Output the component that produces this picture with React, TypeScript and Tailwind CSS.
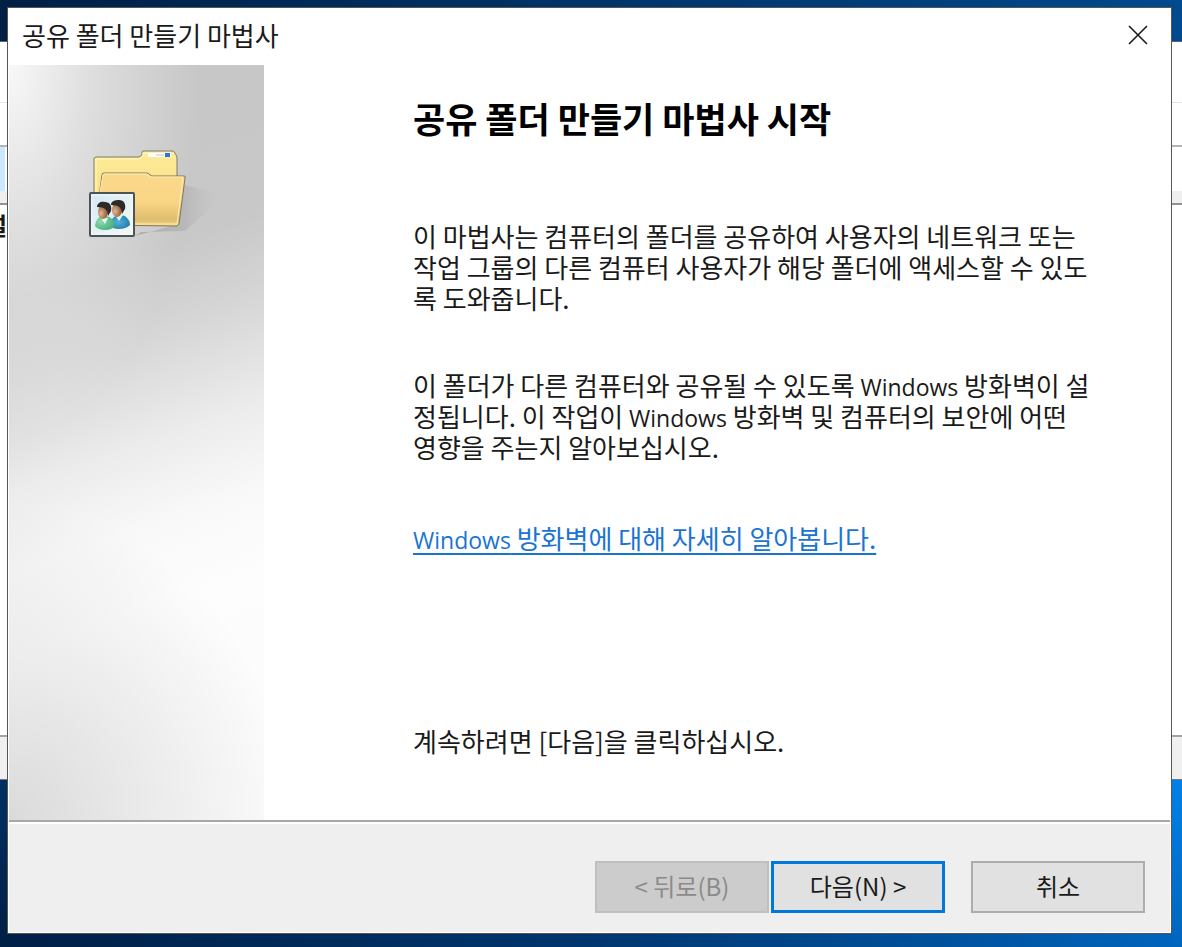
import type { ReactNode } from 'react'

function Latin({ children }: { children: ReactNode }) {
  return <span className="font-['Open_Sans'] text-[23px] leading-none">{children}</span>
}

function SharedFolderIcon() {
  return (
    <svg viewBox="0 0 150 115" className="h-[115px] w-[150px]" aria-hidden="true">
      <defs>
        <linearGradient id="back" x1="0" y1="0" x2="0" y2="1">
          <stop offset="0" stopColor="#fdeb98" />
          <stop offset="1" stopColor="#f8dc80" />
        </linearGradient>
        <linearGradient id="front" x1="0" y1="0" x2="0" y2="1">
          <stop offset="0" stopColor="#fbd98c" />
          <stop offset="0.55" stopColor="#f9d585" />
          <stop offset="0.88" stopColor="#dfbd70" />
          <stop offset="1" stopColor="#f3d27c" />
        </linearGradient>
        <linearGradient id="card" x1="0" y1="0" x2="1" y2="1">
          <stop offset="0" stopColor="#d3eaf3" />
          <stop offset="1" stopColor="#f6f8f4" />
        </linearGradient>
        <linearGradient id="shade" x1="0" y1="0" x2="1" y2="0">
          <stop offset="0" stopColor="#777" stopOpacity="0.4" />
          <stop offset="0.6" stopColor="#888" stopOpacity="0.25" />
          <stop offset="1" stopColor="#aaa" stopOpacity="0" />
        </linearGradient>
        <radialGradient id="face" cx="0.3" cy="0.6" r="0.7">
          <stop offset="0" stopColor="#e2b694" />
          <stop offset="1" stopColor="#855030" />
        </radialGradient>
        <radialGradient id="green" cx="0.3" cy="0.4" r="0.8">
          <stop offset="0" stopColor="#8bdcae" />
          <stop offset="1" stopColor="#3da877" />
        </radialGradient>
        <radialGradient id="blue" cx="0.4" cy="0.5" r="0.8">
          <stop offset="0" stopColor="#4db4dc" />
          <stop offset="1" stopColor="#1a6b9e" />
        </radialGradient>
      </defs>
      <path d="M60 101L66 97 110 96 142 67 138 56 108 50 100 90Z" fill="url(#shade)" />
      <path
        d="M19 84V24q0-2 2-2H64l3-2v-3q0-1 2-1H97q2 0 3 2l2 4V84Z"
        fill="url(#back)"
        stroke="#807b68"
      />
      <path d="M21 83V24H65l3-3v-3H96" fill="none" stroke="#fffbc0" />
      <path d="M73 18H96V22H73Z" fill="#fff" />
      <path d="M81 20h8" stroke="#b9c3d6" />
      <rect x="90" y="18" width="5" height="4" fill="#2c74dc" />
      <path
        d="M20 90L27 40q0-2 2-2H72q2 0 3 2 1 1 3 1H109q2 0 1 2L104 89q-1 2-3 2Z"
        fill="url(#front)"
        stroke="#80765a"
      />
      <path d="M24 62L28 40q0-1 2-1H72l3 3H108L102 89H60" fill="none" stroke="#ffedb5" />
      <rect x="15" y="58" width="44" height="43" rx="1" fill="url(#card)" stroke="#4e5357" strokeWidth="2" />
      <rect x="17" y="60" width="40" height="39" fill="none" stroke="#f3fafc" />
      <path d="M35 90c1-7 5-10 10-10 6 0 10 5 10 10q-4 4-11 4-7 0-9-4Z" fill="url(#blue)" />
      <path d="M40 80l4 6 4-6Z" fill="#e9f2f5" />
      <ellipse cx="42" cy="75" rx="5" ry="7" fill="url(#face)" />
      <path d="M36 70c0-4 4-5 8-5 5 0 7 4 6 9l-3 5c0-6-3-9-11-9Z" fill="#2e2a28" />
      <path d="M20 91c1-7 4-10 9-10 7 0 11 5 11 10q-3 4-10 4-7 0-10-4Z" fill="url(#green)" />
      <path d="M26 83l4 6 3-6Z" fill="#edf5ee" />
      <ellipse cx="28" cy="77" rx="5" ry="7" fill="url(#face)" />
      <path d="M22 72c0-4 4-6 8-5 5 0 7 4 6 9l-3 5c0-6-3-9-11-9Z" fill="#2e2a28" />
    </svg>
  )
}

// the management console left open behind the wizard
function BackgroundWindow() {
  return (
    <div
      aria-hidden="true"
      className="absolute inset-0 flex flex-col overflow-hidden bg-linear-to-r from-[#001f45] via-[#00366f] to-[#0065bd]"
    >
      <div className="h-[41px] bg-linear-to-r from-[#001f45] to-[#004a8d]" />
      <div className="h-[62px] border-t border-b border-t-[#4d6580] border-b-[#e5e5e5] bg-white" />
      <div className="h-[44px] border-b-2 border-[#b4b4b4] bg-white" />
      <div className="flex h-[44px] bg-white">
        <div className="w-[5px] bg-[#cce8ff]" />
      </div>
      <div className="h-[14px] border-b-2 border-[#8e939b] bg-[#efefef]" />
      <div className="flex flex-1 bg-white pt-1">
        <div className="flex w-[7px] justify-end overflow-hidden text-[24px] font-bold">널</div>
      </div>
      <div className="h-[45px] border-t-2 border-b border-t-[#a0a5ad] border-b-[#777] bg-[#f0f0f0]" />
      <div className="flex h-[167px] justify-between">
        <div className="w-[7px] bg-linear-to-b from-[#003063] to-[#001f45]" />
        <div className="w-[10px] bg-linear-to-b from-[#0081e8] to-[#0065bd]" />
      </div>
    </div>
  )
}

export default function App() {
  return (
    <div className="relative flex min-h-screen flex-col pt-[7px] pr-[10px] pb-[13px] pl-[7px] font-['Noto_Sans_CJK_KR',sans-serif] text-[26px] leading-[31px] text-[#1a1a1a]">
      <BackgroundWindow />
      <div role="dialog" aria-labelledby="caption" className="relative flex flex-1 flex-col border border-[#555] bg-white">
        <header className="flex h-[57px] items-center justify-between pr-[23px] pb-1 pl-[14px]">
          <h1 id="caption">공유 폴더 만들기 마법사</h1>
          <button type="button" aria-label="닫기">
            <svg viewBox="0 0 20 20" className="size-5" stroke="#1a1a1a" strokeWidth="1.6">
              <path d="M1 1L19 19M19 1L1 19" />
            </svg>
          </button>
        </header>

        <main className="flex flex-1 px-px">
          <aside className="w-[255px] shrink-0 bg-[radial-gradient(75%_50%_at_0_0,#ffffffe0,#ffffff66_45%,#ffffff00),radial-gradient(110%_42%_at_0_100%,#00000022,#00000000),linear-gradient(160deg,#c6c6c6,#c8c8c8_28%,#d6d6d6_38%,#ebebeb_50%,#f8f8f8_60%,#fdfdfd_70%,#fbfbfb)] pt-[70px] pl-[66px]">
            <SharedFolderIcon />
          </aside>
          <section className="flex-1 pt-8 pl-[149px]">
            <h2 className="text-[35px] leading-[42px] font-bold text-black">공유 폴더 만들기 마법사 시작</h2>
            <p className="mt-[81px]">
              이 마법사는 컴퓨터의 폴더를 공유하여 사용자의 네트워크 또는
              <br />
              작업 그룹의 다른 컴퓨터 사용자가 해당 폴더에 액세스할 수 있도
              <br />
              록 도와줍니다.
            </p>
            <p className="mt-14">
              이 폴더가 다른 컴퓨터와 공유될 수 있도록 <Latin>Windows</Latin> 방화벽이 설
              <br />
              정됩니다. 이 작업이 <Latin>Windows</Latin> 방화벽 및 컴퓨터의 보안에 어떤
              <br />
              영향을 주는지 알아보십시오.
            </p>
            <p className="mt-[60px]">
              <a href="#" className="text-[#1a74d4] underline decoration-2 underline-offset-4">
                <Latin>Windows</Latin> 방화벽에 대해 자세히 알아봅니다.
              </a>
            </p>
            <p className="mt-[172px]">계속하려면 [다음]을 클릭하십시오.</p>
          </section>
        </main>

        <footer className="mx-px mb-px h-[112px] border-t-2 border-[#a8a8a8] bg-white pt-[2px]">
          <div className="flex h-full justify-end bg-[#efefef] pt-[37px] pr-[25px] text-[24px]">
            <button
              type="button"
              disabled
              className="h-[52px] w-[174px] border-2 border-[#bfbfbf] bg-[#ccc] pb-1 text-[#8b8b8b]"
            >
              &lt; 뒤로(B)
            </button>
            <button type="button" className="ml-[2px] h-[52px] w-[174px] border-3 border-[#0078d7] bg-[#e1e1e1] pb-1">
              다음(N) &gt;
            </button>
            <button type="button" className="ml-[26px] h-[52px] w-[174px] border-2 border-[#adadad] bg-[#e1e1e1] pb-1">
              취소
            </button>
          </div>
        </footer>
      </div>
    </div>
  )
}
